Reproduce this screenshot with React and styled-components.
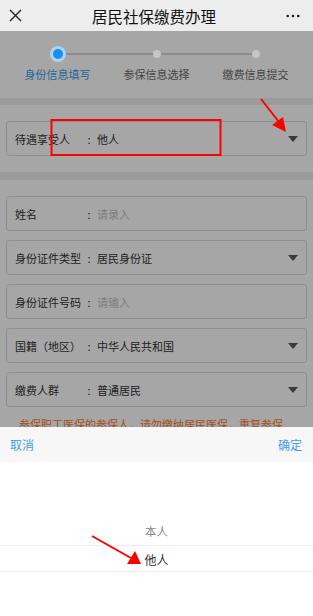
import styled, { createGlobalStyle } from "styled-components";

const GlobalStyle = createGlobalStyle`
  html, body {
    margin: 0;
    padding: 0;
    background: #ffffff;
  }
  body {
    font-family: "Noto Sans CJK SC", "Noto Sans", sans-serif;
  }
`;

const Page = styled.div`
  position: relative;
  width: 313px;
  height: 616px;
  overflow: hidden;
  background: #ffffff;
`;

const Header = styled.div`
  height: 31px;
  background: #ededed;
  display: flex;
  align-items: center;
  justify-content: space-between;
  padding: 0 13px 0 8px;
`;

const Title = styled.div`
  font-size: 15.5px;
  color: #111;
`;

const IconBox = styled.div`
  width: 14px;
  height: 14px;
  display: flex;
  align-items: center;
  justify-content: center;
`;

const Steps = styled.div`
  display: flex;
  padding: 15px 8px 16px;
`;

const Step = styled.div`
  flex: 1;
  position: relative;
  display: flex;
  flex-direction: column;
  align-items: center;

  // connecting line to the next step
  &::before {
    content: "";
    display: ${(p) => (p.last ? "none" : "block")};
    position: absolute;
    top: 7px;
    left: 50%;
    width: 100%;
    height: 2px;
    background: #d8d8d8;
  }
`;

const DotWrap = styled.div`
  height: 16px;
  display: flex;
  align-items: center;
  justify-content: center;
  position: relative;
  z-index: 1;
`;

const Dot = styled.div`
  width: ${(p) => (p.active ? "10px" : "8px")};
  height: ${(p) => (p.active ? "10px" : "8px")};
  border-radius: 50%;
  background: ${(p) => (p.active ? "#1a8ee8" : "#c6c6c6")};
  box-shadow: ${(p) => (p.active ? "0 0 0 3px #a9d4f6" : "none")};
`;

const StepLabel = styled.div`
  margin-top: 4px;
  font-size: 11px;
  line-height: 16px;
  color: ${(p) => (p.active ? "#3a9fec" : "#6b6b6b")};
`;

const Band = styled.div`
  height: ${(p) => p.h}px;
  background: #efefef;
`;

const Section = styled.div`
  padding: 16px 6px ${(p) => p.pb || 0}px;
`;

const Row = styled.div`
  height: 35px;
  box-sizing: border-box;
  border: 1px solid #dcdcdc;
  border-radius: 3px;
  display: flex;
  align-items: center;
  padding: 0 8px;
  margin-bottom: ${(p) => p.mb ?? 9}px;
  font-size: 11px;
  color: #333;
`;

const Label = styled.div`
  width: 68px;
  white-space: nowrap;
`;

const Colon = styled.div`
  width: 12px;
  text-align: center;
  padding-right: 2px;
`;

const Value = styled.div`
  flex: 1;
  color: ${(p) => (p.placeholder ? "#c4c4c4" : "#333")};
`;

const Caret = styled.div`
  width: 0;
  height: 0;
  border-left: 5px solid transparent;
  border-right: 5px solid transparent;
  border-top: 6px solid #5a5a5a;
`;

const Warning = styled.div`
  margin-top: 1px;
  padding-left: 13px;
  font-size: 11px;
  line-height: 16px;
  color: #ff7a30;
`;

const Mask = styled.div`
  position: absolute;
  top: 31px;
  left: 0;
  right: 0;
  bottom: 0;
  background: rgba(0, 0, 0, 0.35);
`;

const Sheet = styled.div`
  position: absolute;
  left: 0;
  right: 0;
  bottom: 0;
  height: 189px;
  background: #ffffff;
`;

const SheetBar = styled.div`
  height: 35px;
  background: #f7f7f7;
  display: flex;
  align-items: center;
  justify-content: space-between;
  padding: 0 11px 0 10px;
  font-size: 12px;
  color: #3d9de6;
`;

const Wheel = styled.div`
  padding-top: 56px;
`;

const WheelItem = styled.div`
  height: 27px;
  line-height: 27px;
  text-align: center;
  font-size: ${(p) => (p.selected ? "12px" : "11.5px")};
  color: ${(p) => (p.selected ? "#333" : "#8a8a8a")};
  border-top: ${(p) => (p.selected ? "1px solid #eeeeee" : "none")};
  border-bottom: ${(p) => (p.selected ? "1px solid #eeeeee" : "none")};
  box-sizing: border-box;
`;

const Annotations = styled.svg`
  position: absolute;
  top: 0;
  left: 0;
  pointer-events: none;
`;

const rows = [
  { label: "姓名", value: "请录入", placeholder: true },
  { label: "身份证件类型", value: "居民身份证", select: true },
  { label: "身份证件号码", value: "请输入", placeholder: true },
  { label: "国籍（地区）", value: "中华人民共和国", select: true },
  { label: "缴费人群", value: "普通居民", select: true },
];

const steps = ["身份信息填写", "参保信息选择", "缴费信息提交"];

function FormRow({ label, value, placeholder, select, mb }) {
  return (
    <Row mb={mb}>
      <Label>{label}</Label>
      <Colon>:</Colon>
      <Value placeholder={placeholder}>{value}</Value>
      {select && <Caret />}
    </Row>
  );
}

export default function App() {
  return (
    <Page>
      <GlobalStyle />
      <Header>
        <IconBox>
          <svg width="13" height="13" viewBox="0 0 13 13">
            <path d="M1 1L12 12M12 1L1 12" stroke="#222" strokeWidth="1.4" />
          </svg>
        </IconBox>
        <Title>居民社保缴费办理</Title>
        <IconBox>
          <svg width="16" height="4" viewBox="0 0 16 4">
            <circle cx="2" cy="2" r="1.5" fill="#222" />
            <circle cx="8" cy="2" r="1.5" fill="#222" />
            <circle cx="14" cy="2" r="1.5" fill="#222" />
          </svg>
        </IconBox>
      </Header>

      <Steps>
        {steps.map((s, i) => (
          <Step key={s} last={i === steps.length - 1}>
            <DotWrap>
              <Dot active={i === 0} />
            </DotWrap>
            <StepLabel active={i === 0}>{s}</StepLabel>
          </Step>
        ))}
      </Steps>

      <Band h={7} />
      <Section pb={16}>
        <FormRow label="待遇享受人" value="他人" select mb={0} />
      </Section>
      <Band h={8} />
      <Section>
        {rows.map((r) => (
          <FormRow key={r.label} {...r} />
        ))}
        <Warning>参保职工医保的参保人，请勿缴纳居民医保，重复参保</Warning>
      </Section>

      <Mask />

      <Sheet>
        <SheetBar>
          <span>取消</span>
          <span>确定</span>
        </SheetBar>
        <Wheel>
          <WheelItem>本人</WheelItem>
          <WheelItem selected>他人</WheelItem>
        </Wheel>
      </Sheet>

      <Annotations width="313" height="616" viewBox="0 0 313 616">
        <rect x="51.5" y="120" width="169" height="35" fill="none" stroke="#ff0000" strokeWidth="2" />
        <line x1="261" y1="99" x2="279" y2="122" stroke="#ff0000" strokeWidth="2" />
        <polygon points="286,132 272,125 283,117" fill="#ff0000" />
        <line x1="92" y1="536" x2="131" y2="558" stroke="#ff0000" strokeWidth="2" />
        <polygon points="141,564 127,564 135,551" fill="#ff0000" />
      </Annotations>
    </Page>
  );
}
